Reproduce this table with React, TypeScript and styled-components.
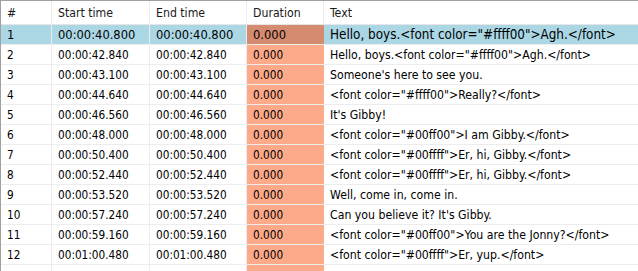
import React from "react";
import styled, { createGlobalStyle, css } from "styled-components";

const Global = createGlobalStyle`
  html, body { margin: 0; padding: 0; background: #ffffff; }
  body { font-family: "DejaVu Sans Condensed", "DejaVu Sans", sans-serif; font-stretch: condensed; }
`;

const Grid = styled.div`
  width: 638px;
  height: 271px;
  overflow: hidden;
  box-sizing: border-box;
  border-top: 1px solid #a0a0a0;
  border-left: 1px solid #a0a0a0;
  background: #ffffff;
`;

const Row = styled.div<{ $header?: boolean; $selected?: boolean }>`
  display: grid;
  grid-template-columns: 51px 98px 97px 77px 1fr;
  height: ${(p) => (p.$header ? "24px" : "20px")};
  box-sizing: border-box;
  border-bottom: 1px solid ${(p) => (p.$header ? "#e6e6e6" : "#ededed")};
  background: ${(p) => (p.$selected ? "#abd7e5" : "#ffffff")};
  color: ${(p) => (p.$header ? "#1a1a1a" : "#000000")};
  --text-size: ${(p) => (p.$selected ? "13.35px" : "12.2px")};
  --num-size: ${(p) => (p.$selected ? "12.8px" : "11.7px")};
  font-size: var(--text-size);
`;

const Cell = styled.div<{ $duration?: boolean; $selected?: boolean; $num?: boolean }>`
  display: flex;
  align-items: center;
  padding-left: 6px;
  box-sizing: border-box;
  border-right: 1px solid #ececec;
  white-space: nowrap;
  overflow: hidden;
  ${(p) => p.$num && css`font-size: var(--num-size);`}
  ${(p) =>
    p.$duration &&
    css`
      background: ${p.$selected ? "#d58b70" : "#fdaa8a"};
      border-right-color: ${p.$selected ? "#d58b70" : "#fdaa8a"};
    `}
  &:last-child { border-right: none; }
`;

const rows: [string, string, string][] = [
  ["00:00:40.800", "00:00:40.800", 'Hello, boys.<font color="#ffff00">Agh.</font>'],
  ["00:00:42.840", "00:00:42.840", 'Hello, boys.<font color="#ffff00">Agh.</font>'],
  ["00:00:43.100", "00:00:43.100", "Someone's here to see you."],
  ["00:00:44.640", "00:00:44.640", '<font color="#ffff00">Really?</font>'],
  ["00:00:46.560", "00:00:46.560", "It's Gibby!"],
  ["00:00:48.000", "00:00:48.000", '<font color="#00ff00">I am Gibby.</font>'],
  ["00:00:50.400", "00:00:50.400", '<font color="#00ffff">Er, hi, Gibby.</font>'],
  ["00:00:52.440", "00:00:52.440", '<font color="#00ffff">Er, hi, Gibby.</font>'],
  ["00:00:53.520", "00:00:53.520", "Well, come in, come in."],
  ["00:00:57.240", "00:00:57.240", "Can you believe it? It's Gibby."],
  ["00:00:59.160", "00:00:59.160", '<font color="#00ff00">You are the Jonny?</font>'],
  ["00:01:00.480", "00:01:00.480", '<font color="#00ffff">Er, yup.</font>'],
  ["", "", ""],
];

export default function App() {
  return (
    <>
      <Global />
      <Grid>
        <Row $header>
          <Cell>#</Cell>
          <Cell>Start time</Cell>
          <Cell>End time</Cell>
          <Cell>Duration</Cell>
          <Cell>Text</Cell>
        </Row>
        {rows.map(([s, e, t], i) => {
          const sel = i === 0;
          const filled = i < 12;
          return (
            <Row key={i} $selected={sel}>
              <Cell $num>{filled ? i + 1 : ""}</Cell>
              <Cell $num>{s}</Cell>
              <Cell $num>{e}</Cell>
              <Cell $num $duration $selected={sel}>{filled ? "0.000" : ""}</Cell>
              <Cell>{t}</Cell>
            </Row>
          );
        })}
      </Grid>
    </>
  );
}
